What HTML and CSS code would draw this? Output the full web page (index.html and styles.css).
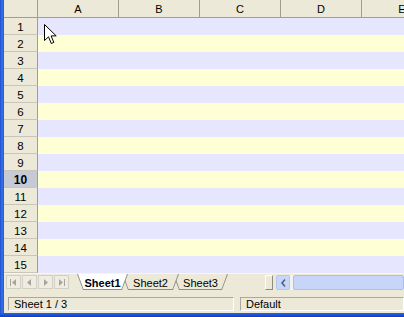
FILE: index.html
```html
<!DOCTYPE html>
<html>
<head>
<meta charset="utf-8">
<link rel="stylesheet" href="styles.css">
</head>
<body>
<div class="window">
  <div class="frame-left"></div>
  <div class="main">
    <div class="sheet">
      <div class="corner"></div>
      <div class="colhead">A</div>
      <div class="colhead">B</div>
      <div class="colhead">C</div>
      <div class="colhead">D</div>
      <div class="colhead">E</div>

      <div class="rowhead">1</div><div class="cells lav"></div>
      <div class="rowhead">2</div><div class="cells yel"></div>
      <div class="rowhead">3</div><div class="cells lav"></div>
      <div class="rowhead">4</div><div class="cells yel"></div>
      <div class="rowhead">5</div><div class="cells lav"></div>
      <div class="rowhead">6</div><div class="cells yel"></div>
      <div class="rowhead">7</div><div class="cells lav"></div>
      <div class="rowhead">8</div><div class="cells yel"></div>
      <div class="rowhead">9</div><div class="cells lav"></div>
      <div class="rowhead sel">10</div><div class="cells yel"></div>
      <div class="rowhead">11</div><div class="cells lav"></div>
      <div class="rowhead">12</div><div class="cells yel"></div>
      <div class="rowhead">13</div><div class="cells lav"></div>
      <div class="rowhead">14</div><div class="cells yel"></div>
      <div class="rowhead">15</div><div class="cells lav"></div>
    </div>

    <div class="tabbar">
      <div class="navs">
        <div class="nav"><svg width="13" height="12" viewBox="0 0 13 12"><rect x="3" y="3" width="1" height="7" fill="#a9a699"/><path d="M5 6.5 L9 3 L9 10 Z" fill="#a9a699"/></svg></div>
        <div class="nav"><svg width="13" height="12" viewBox="0 0 13 12"><path d="M4 6.5 L8 3 L8 10 Z" fill="#a9a699"/></svg></div>
        <div class="nav"><svg width="13" height="12" viewBox="0 0 13 12"><path d="M5 3 L9 6.5 L5 10 Z" fill="#a9a699"/></svg></div>
        <div class="nav"><svg width="13" height="12" viewBox="0 0 13 12"><path d="M4 3 L8 6.5 L4 10 Z" fill="#a9a699"/><rect x="9" y="3" width="1" height="7" fill="#a9a699"/></svg></div>
      </div>
      <div class="tabs">
        <div class="tab active t1"><span class="tab-fill">Sheet1</span></div>
        <div class="tab t2"><span class="tab-fill">Sheet2</span></div>
        <div class="tab t3"><span class="tab-fill">Sheet3</span></div>
      </div>
      <div class="splitter"></div>
      <div class="hscroll">
        <div class="arrowbtn"><svg width="11" height="12" viewBox="0 0 11 12"><path d="M7 2.5 L4 6 L7 9.5" fill="none" stroke="#4d6185" stroke-width="1.6"/></svg></div>
        <div class="track"><div class="thumb"></div></div>
      </div>
    </div>

    <div class="statusbar">
      <div class="field f1">Sheet 1 / 3</div>
      <div class="field f2">Default</div>
    </div>
  </div>
</div>
<div class="frame-bottom"></div>

<svg class="cursor" width="14" height="22" viewBox="0 0 14 22"><path d="M0.5 0.5 L0.5 16.5 L4.5 12.8 L7.3 19.5 L9.8 18.4 L7.1 11.9 L12.2 11.9 Z" fill="#fff" stroke="#000" stroke-width="1" stroke-linejoin="miter"/></svg>
</body>
</html>
```

FILE: styles.css
```css
* { box-sizing: border-box; }
html, body { margin: 0; padding: 0; }
body {
  width: 404px;
  height: 317px;
  overflow: hidden;
  position: relative;
  background: #ece9d8;
  font-family: "Liberation Sans", Arial, sans-serif;
  font-size: 11px;
  color: #000;
}
.window { display: flex; height: 313px; }
.frame-left {
  width: 4px;
  flex: none;
  background: linear-gradient(to right, #1a50c9, #3a72ea 50%, #2058d4);
}
.frame-bottom {
  height: 4px;
  background: linear-gradient(#2b63e2, #0b3fbf);
}
.main {
  flex: 1;
  min-width: 0;
  display: flex;
  flex-direction: column;
  overflow: hidden;
}

/* spreadsheet grid */
.sheet {
  display: grid;
  grid-template-columns: 34px repeat(5, 81px);
  grid-template-rows: 18px;
  grid-auto-rows: 17px;
  height: 273px;
  flex: none;
}
.corner, .colhead {
  background: #ece9d8;
  border-right: 1px solid #a19e91;
  border-bottom: 1px solid #a19e91;
}
.colhead {
  display: flex;
  align-items: center;
  justify-content: center;
  padding-top: 1px;
}
.rowhead {
  background: #ece9d8;
  border-right: 1px solid #a19e91;
  border-bottom: 1px solid #c9c6b9;
  display: flex;
  align-items: center;
  justify-content: center;
  font-size: 11.5px;
  padding-top: 1px;
}
.rowhead.sel {
  background: #c6cad4;
  font-weight: bold;
  font-size: 12px;
}
.cells { grid-column: span 5; }
.lav { background: #e6e6ff; }
.yel { background: #ffffd6; }

/* tab bar */
.tabbar {
  height: 19px;
  flex: none;
  display: flex;
  align-items: flex-start;
  background: #ece9d8;
  border-top: 1px solid #f7f6f1;
}
.navs {
  display: flex;
  gap: 1px;
  padding: 1px 0 0 2px;
}
.nav {
  width: 15px;
  height: 14px;
  border: 1px solid #d2cfc3;
  background: #efede3;
  display: flex;
  align-items: center;
  justify-content: center;
}
.tabs {
  display: flex;
  margin-left: 8px;
  width: 188px;
  height: 17px;
}
.tab {
  height: 16px;
  background: #8f8d84;
  clip-path: polygon(0 0, 100% 0, calc(100% - 6px) 100%, 6px 100%);
  display: flex;
}
.tab + .tab { margin-left: -6px; }
.tab-fill {
  flex: 1;
  background: #ece9d8;
  clip-path: polygon(1px 0, calc(100% - 1px) 0, calc(100% - 6.5px) calc(100% - 1px), 6.5px calc(100% - 1px));
  display: flex;
  align-items: center;
  justify-content: center;
  padding-top: 1px;
}
.tab.active .tab-fill { background: #ffffff; font-weight: bold; }
.t1 { width: 51px; z-index: 3; }
.t2 { width: 57px; z-index: 2; }
.t3 { width: 55px; z-index: 1; }

.splitter {
  width: 8px;
  height: 15px;
  margin: 1px 0 0 0;
  border: 1px solid #8e8b80;
  border-top-color: #fff;
  border-left-color: #fff;
  background: #ece9d8;
}
.hscroll {
  flex: 1;
  display: flex;
  height: 15px;
  margin-top: 1px;
  margin-left: 3px;
}
.arrowbtn {
  width: 14px;
  height: 15px;
  background: #c8d6f8;
  border: 1px solid #b5c7ef;
  border-radius: 2px;
  display: flex;
  align-items: center;
  justify-content: center;
}
.track {
  flex: 1;
  background: #f4f3ee;
  padding: 0 0 0 3px;
}
.thumb {
  height: 15px;
  background: #c6d5f8;
  border: 1px solid #aabfe9;
  border-radius: 2px;
}

/* status bar */
.statusbar {
  flex: 1;
  display: flex;
  gap: 6px;
  padding: 5px 0 0 4px;
  background: #ece9d8;
}
.field {
  height: 14px;
  border: 1px solid #aca899;
  border-right-color: #fff;
  border-bottom-color: #fff;
  display: flex;
  align-items: center;
  padding-left: 5px;
}
.f1 { width: 226px; }
.f2 { flex: 1; }

.cursor {
  position: absolute;
  left: 44px;
  top: 24px;
}
```
